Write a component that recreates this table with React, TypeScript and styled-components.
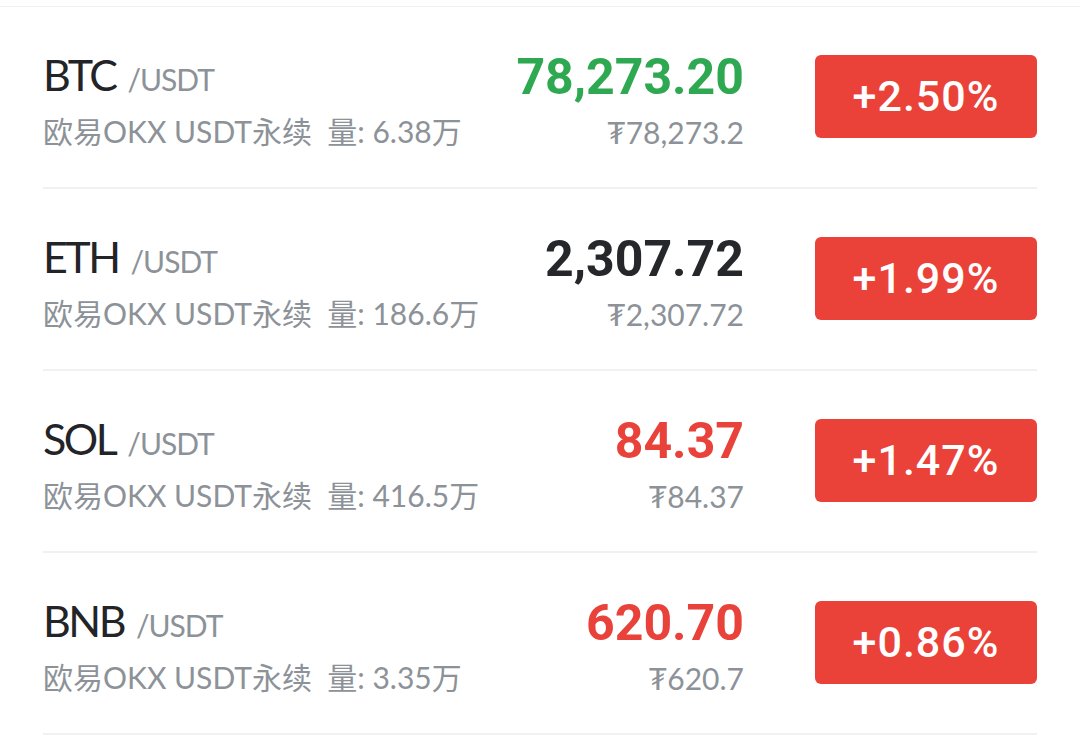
import styled, { createGlobalStyle } from "styled-components"

const GlobalStyle = createGlobalStyle`
  html, body {
    margin: 0;
    padding: 0;
    background: #ffffff;
  }
  body {
    font-family: Lato, "Noto Sans CJK SC", sans-serif;
  }
`

const List = styled.div`
  width: 1080px;
  padding-top: 6px;
`

const TopLine = styled.div`
  height: 1px;
  background: #eef0f1;
`

const Row = styled.div`
  display: flex;
  align-items: center;
  height: 180px;
  margin: 0 43px;
  border-bottom: 2px solid #f0f1f2;
`

const Left = styled.div`
  flex: 1;
  display: flex;
  flex-direction: column;
  gap: 6px;
  margin-top: 6px;
`

const Pair = styled.div`
  display: flex;
  align-items: baseline;
  gap: 12px;
  line-height: 52px;
`

const Symbol = styled.span`
  font-size: 43px;
  letter-spacing: -2.5px;
  color: #222428;
`

const Quote = styled.span`
  font-size: 30px;
  letter-spacing: -1px;
  color: #8c9298;
`

const Meta = styled.div`
  font-size: 30px;
  line-height: 40px;
  color: #8c9298;
  white-space: pre;
`

const Prices = styled.div`
  display: flex;
  flex-direction: column;
  align-items: flex-end;
  gap: 6px;
  margin-top: 6px;
`

const Price = styled.div<{ $tone: "up" | "down" | "flat" }>`
  font-family: Roboto, sans-serif;
  font-weight: 700;
  font-size: 50px;
  line-height: 58px;
  color: ${(p) => (p.$tone === "up" ? "#2fa852" : p.$tone === "down" ? "#e8423a" : "#25272b")};
`

const SubPrice = styled.div`
  font-size: 30px;
  line-height: 40px;
  color: #8c9298;
`

const Badge = styled.div`
  margin-left: 71px;
  margin-top: -2px;
  width: 222px;
  height: 83px;
  border-radius: 6px;
  background: #ea4239;
  color: #ffffff;
  display: flex;
  align-items: center;
  justify-content: center;
  font-family: Roboto, sans-serif;
  font-weight: 500;
  font-size: 43px;
  letter-spacing: 1px;
`

const rows = [
  { sym: "BTC", vol: "6.38万", price: "78,273.20", tone: "up" as const, sub: "₮78,273.2", chg: "+2.50%" },
  { sym: "ETH", vol: "186.6万", price: "2,307.72", tone: "flat" as const, sub: "₮2,307.72", chg: "+1.99%" },
  { sym: "SOL", vol: "416.5万", price: "84.37", tone: "down" as const, sub: "₮84.37", chg: "+1.47%" },
  { sym: "BNB", vol: "3.35万", price: "620.70", tone: "down" as const, sub: "₮620.7", chg: "+0.86%" },
]

export default function App() {
  return (
    <>
      <GlobalStyle />
      <List>
        <TopLine />
        {rows.map((r) => (
          <Row key={r.sym}>
            <Left>
              <Pair>
                <Symbol>{r.sym}</Symbol>
                <Quote>/USDT</Quote>
              </Pair>
              <Meta>{"欧易OKX USDT永续  量: " + r.vol}</Meta>
            </Left>
            <Prices>
              <Price $tone={r.tone}>{r.price}</Price>
              <SubPrice>{r.sub}</SubPrice>
            </Prices>
            <Badge>{r.chg}</Badge>
          </Row>
        ))}
      </List>
    </>
  )
}
